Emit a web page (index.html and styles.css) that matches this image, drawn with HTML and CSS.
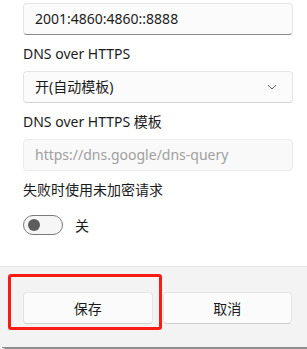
FILE: index.html
```html
<!DOCTYPE html>
<html lang="zh-CN">
<head>
  <meta charset="UTF-8" />
  <meta name="viewport" content="width=device-width, initial-scale=1.0" />
  <title>DNS 设置</title>
  <link rel="stylesheet" href="styles.css">
</head>
<body>
  <div class="dialog">
    <div class="content">
      <div class="textbox first">2001:4860:4860::8888</div>

      <div class="label">DNS over HTTPS</div>
      <div class="combo">
        <span>开(自动模板)</span>
        <svg class="chevron" width="10" height="6" viewBox="0 0 10 6">
          <path d="M1 1 L5 5 L9 1" fill="none" stroke="#5f5f5f" stroke-width="1" />
        </svg>
      </div>

      <div class="label">DNS over HTTPS 模板</div>
      <div class="textbox disabled">https://dns.google/dns-query</div>

      <div class="label">失败时使用未加密请求</div>
      <div class="toggle-row">
        <span class="toggle"><span class="knob"></span></span>
        <span>关</span>
      </div>
    </div>

    <div class="footer">
      <button class="btn">保存</button>
      <button class="btn">取消</button>
    </div>
  </div>
  <!-- annotation box around the save button -->
  <div class="highlight"></div>
</body>
</html>
```

FILE: styles.css
```css
html, body {
  margin: 0;
  padding: 0;
}
body {
  font-family: 'Noto Sans', 'Noto Sans CJK SC', sans-serif;
  font-size: 14px;
  color: #1b1b1b;
  background: #fff;
  width: 307px;
  height: 349px;
  overflow: hidden;
  position: relative;
}
.dialog {
  display: flex;
  flex-direction: column;
  height: 349px;
  box-sizing: border-box;
  border-bottom: 2px solid #8c8c8c;
  border-bottom-left-radius: 6px;
}
.content {
  height: 266px;
  padding: 3px 14px 0 23px;
  box-sizing: border-box;
}
.textbox,
.combo {
  height: 32px;
  box-sizing: border-box;
  border: 1px solid #e5e5e5;
  border-radius: 4px;
  background: #fbfbfb;
  padding: 0 11px;
  display: flex;
  align-items: center;
  line-height: 20px;
}
.textbox.first {
  border-bottom-color: #8a8a8a;
}
.textbox.disabled {
  background: #f9f9f9;
  border-color: #ececec;
  color: #a0a0a0;
  margin-top: 7px;
}
.combo {
  justify-content: space-between;
  margin-top: 7px;
  border-bottom-color: #d4d4d4;
}
.chevron {
  margin-right: 4px;
}
.label {
  line-height: 20px;
  margin-top: 7px;
}
.textbox + .label,
.combo + .label {
  margin-top: 9px;
}
.toggle-row {
  display: flex;
  align-items: center;
  gap: 12px;
  margin-top: 15px;
  height: 20px;
}
.toggle {
  width: 40px;
  height: 20px;
  box-sizing: border-box;
  border: 1px solid #7a7a7a;
  border-radius: 10px;
  background: #f6f6f6;
  display: flex;
  align-items: center;
  padding-left: 4px;
}
.knob {
  width: 12px;
  height: 12px;
  border-radius: 50%;
  background: #5d5d5d;
}
.footer {
  flex: 1;
  background: #f3f3f3;
  border-top: 1px solid #e5e5e5;
  padding: 25px 15px 0 23px;
  display: grid;
  grid-template-columns: 1fr 1fr;
  gap: 10px;
  align-items: start;
}
.btn {
  font-family: inherit;
  font-size: 14px;
  color: #1b1b1b;
  height: 32px;
  background: #fbfbfb;
  border: 1px solid #e5e5e5;
  border-bottom-color: #cfcfcf;
  border-radius: 4px;
  padding: 0;
}
.highlight {
  position: absolute;
  left: 8px;
  top: 274px;
  width: 154px;
  height: 56px;
  box-sizing: border-box;
  border: 3px solid #fa1c14;
  border-radius: 3px;
}
```
